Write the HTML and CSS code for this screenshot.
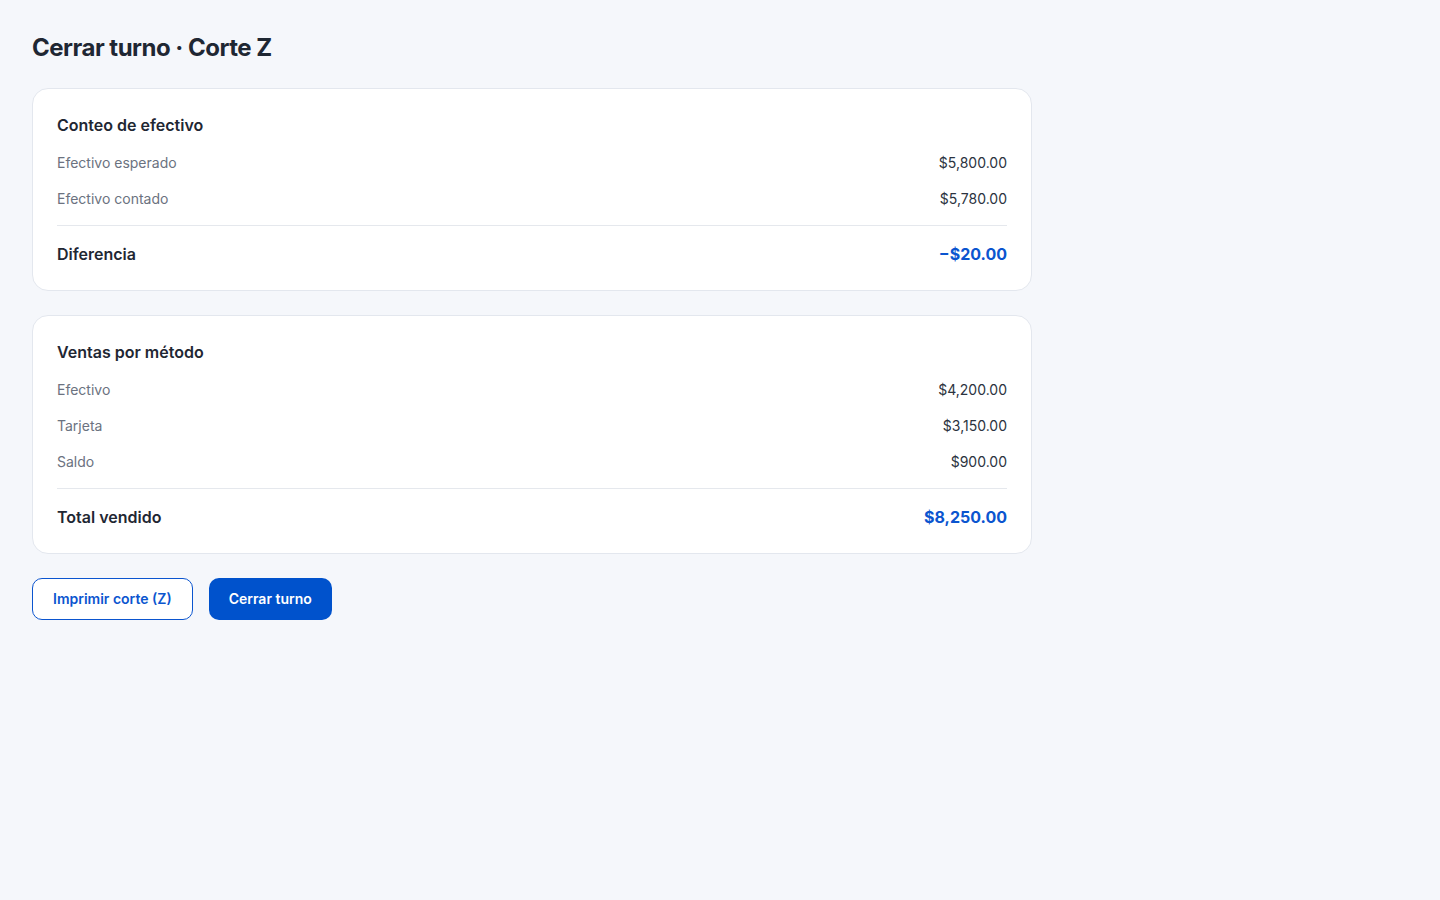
FILE: index.html
```html
<html>

<head>
  <meta name="viewport" content="width=device-width, initial-scale=1" />
  <link rel="stylesheet" href="styles.css">
  <title>Cerrar turno</title>
</head>

<body>
  <div class="page">
    <h1>Cerrar turno · Corte Z</h1>

    <section class="card">
      <h2>Conteo de efectivo</h2>
      <div class="row"><span>Efectivo esperado</span><span class="amount">$5,800.00</span></div>
      <div class="row"><span>Efectivo contado</span><span class="amount">$5,780.00</span></div>
      <div class="total">
        <span>Diferencia</span>
        <span class="total-amount">−$20.00</span>
      </div>
    </section>

    <section class="card">
      <h2>Ventas por método</h2>
      <div class="row"><span>Efectivo</span><span class="amount">$4,200.00</span></div>
      <div class="row"><span>Tarjeta</span><span class="amount">$3,150.00</span></div>
      <div class="row"><span>Saldo</span><span class="amount">$900.00</span></div>
      <div class="total">
        <span>Total vendido</span>
        <span class="total-amount">$8,250.00</span>
      </div>
    </section>

    <div class="actions">
      <button class="btn btn-outline">Imprimir corte (Z)</button>
      <button class="btn btn-primary">Cerrar turno</button>
    </div>
  </div>
</body>

</html>
```

FILE: styles.css
```css
body {
  margin: 0;
  font-family: Inter, "Open Sans", sans-serif;
  background-color: #f5f7fb;
  color: #1f2733;
}

.page {
  width: 1000px;
  padding: 32px;
}

h1 {
  margin: 0 0 24px;
  font-size: 24px;
  line-height: 32px;
  font-weight: 700;
  letter-spacing: -0.5px;
}

.card {
  background-color: #fff;
  border: 1px solid #e3e7ee;
  border-radius: 16px;
  padding: 24px;
  margin-bottom: 24px;
}

h2 {
  margin: 0 0 8px;
  font-size: 16px;
  line-height: 24px;
  font-weight: 600;
}

.row {
  display: flex;
  justify-content: space-between;
  padding: 8px 0;
  font-size: 14px;
  line-height: 20px;
  color: #6b7280;
}

.amount {
  color: #2b3340;
}

.total {
  display: flex;
  justify-content: space-between;
  margin-top: 8px;
  padding-top: 16px;
  border-top: 1px solid #e5e8ed;
  font-size: 16px;
  line-height: 24px;
  font-weight: 600;
}

.total-amount {
  color: #0b55cf;
  font-weight: 700;
}

.actions {
  display: flex;
  gap: 16px;
}

.btn {
  font-family: inherit;
  font-size: 14px;
  line-height: 20px;
  font-weight: 600;
  padding: 10px 20px;
  border-radius: 10px;
  border: 1px solid #0b55cf;
  cursor: pointer;
}

.btn-outline {
  background-color: #fff;
  color: #0b55cf;
}

.btn-primary {
  background-color: #0052cc;
  color: #fff;
  border: none;
  padding: 11px 20px;
}
```
